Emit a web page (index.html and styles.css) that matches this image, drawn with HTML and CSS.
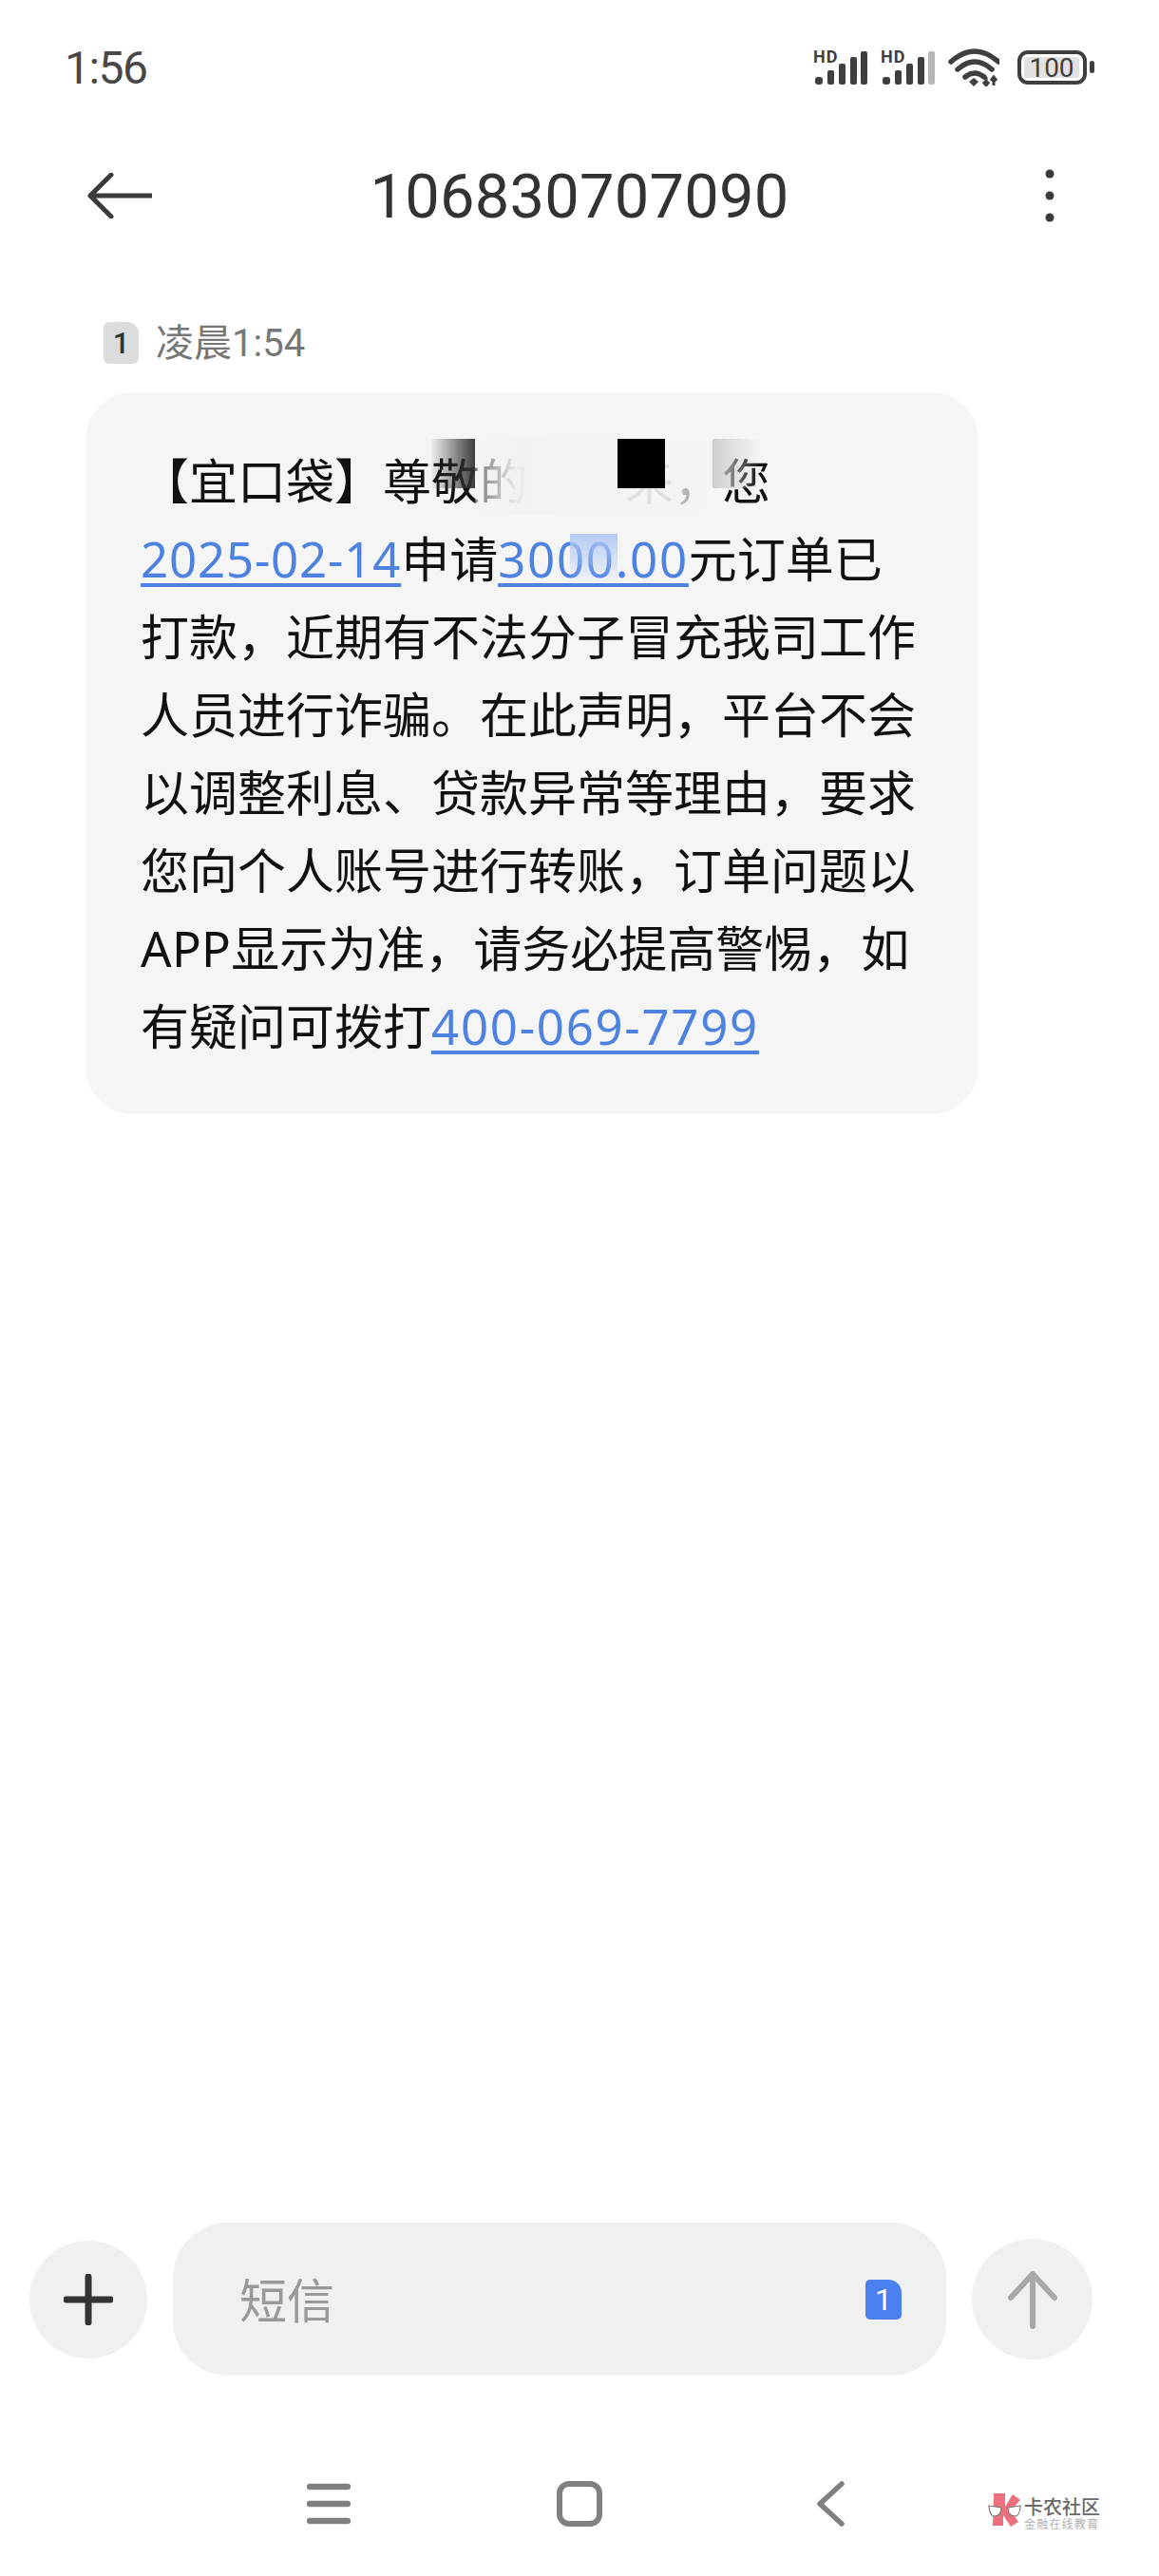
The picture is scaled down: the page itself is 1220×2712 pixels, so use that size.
FILE: index.html
```html
<!DOCTYPE html>
<html lang="zh-CN">
<head>
    <meta charset="UTF-8">
    <meta name="viewport" content="width=device-width, initial-scale=1.0">
    <title>106830707090</title>
    <link rel="stylesheet" href="styles.css">
</head>
<body>
    <div class="status-bar">
        <span class="clock">1:56</span>
        <div class="status-icons">
            <svg class="signal" width="57" height="43" viewBox="0 -6 57 43">
                <text x="0" y="12.5" class="hd">HD</text>
                <rect x="2" y="28" width="8" height="8" rx="3"/>
                <rect x="15" y="21" width="7" height="15" rx="2"/>
                <rect x="27" y="14" width="7" height="22" rx="2"/>
                <rect x="39" y="7" width="7" height="29" rx="2"/>
                <rect x="50" y="1" width="7" height="35" rx="2"/>
            </svg>
            <svg class="signal" width="57" height="43" viewBox="0 -6 57 43">
                <text x="0" y="12.5" class="hd">HD</text>
                <rect x="2" y="28" width="8" height="8" rx="3"/>
                <rect x="15" y="21" width="7" height="15" rx="2"/>
                <rect x="27" y="14" width="7" height="22" rx="2"/>
                <rect x="39" y="7" width="7" height="29" rx="2"/>
                <rect class="bar-off" x="50" y="1" width="7" height="35" rx="2"/>
            </svg>
            <svg class="wifi" width="54" height="40" viewBox="0 0 54 40">
                <path d="M3 14Q28-8 53 14M10 22Q28 6 46 22M18 30Q28 22 38 30" fill="none" stroke="#3f3f3f" stroke-width="5.5" stroke-linecap="round"/>
                <path d="M22 35l5-4 5 4-5 5z" fill="#3f3f3f"/>
                <path d="M40 30v9M37 35l3 4 3-4M48 39v-9M45 34l3-4 3 4" fill="none" stroke="#3f3f3f" stroke-width="3"/>
            </svg>
            <svg class="battery" width="81" height="36" viewBox="0 0 81 36">
                <rect x="2" y="2" width="69" height="32" rx="9" fill="none" stroke="#3f3f3f" stroke-width="4"/>
                <rect x="7" y="7" width="58" height="22" rx="2" fill="#e2e2e2"/>
                <text x="36" y="28" class="battery-num">100</text>
                <rect x="76" y="11" width="5" height="13" rx="2.5" fill="#3f3f3f"/>
            </svg>
        </div>
    </div>

    <div class="header">
        <svg class="back" width="68" height="48" viewBox="0 0 68 48">
            <path d="M25 2L3 24l22 22M3 24h65" fill="none" stroke="#3a3a3a" stroke-width="5" stroke-linecap="round" stroke-linejoin="round"/>
        </svg>
        <h1 class="title">106830707090</h1>
        <svg class="more" width="10" height="56" viewBox="0 0 10 56">
            <circle cx="5" cy="5" r="4.5"/>
            <circle cx="5" cy="28" r="4.5"/>
            <circle cx="5" cy="51" r="4.5"/>
        </svg>
    </div>

    <div class="meta">
        <span class="sim-badge">1</span>
        <span class="meta-time">凌晨1:54</span>
    </div>

    <div class="bubble">
        【宜口袋】尊敬的　　来，您<br>
        <a class="link link-date">2025-02-14</a>申请<a class="link">3000.00</a>元订单已<br>
        打款，近期有不法分子冒充我司工作<br>
        人员进行诈骗。在此声明，平台不会<br>
        以调整利息、贷款异常等理由，要求<br>
        您向个人账号进行转账，订单问题以<br>
        <span class="latin">APP</span>显示为准，请务必提高警惕，如<br>
        有疑问可拨打<a class="link">400-069-7799</a>
        <span class="mask mask-fade"></span>
        <span class="mask mask-dark"></span>
        <span class="mask mask-black"></span>
        <span class="mask mask-grey"></span>
        <span class="mask mask-blue"></span>
    </div>

    <div class="composer">
        <div class="round-btn">
            <svg width="52" height="54" viewBox="0 0 52 54">
                <path d="M26 3v48M3 27h46" fill="none" stroke="#333" stroke-width="7" stroke-linecap="round"/>
            </svg>
        </div>
        <div class="input-box">
            <span class="placeholder">短信</span>
            <span class="sim-tag">1</span>
        </div>
        <div class="round-btn round-btn-send">
            <svg width="52" height="62" viewBox="0 0 52 62">
                <path d="M26 59V4M3 29L26 4l23 25" fill="none" stroke="#a8a8a8" stroke-width="6" stroke-linecap="round" stroke-linejoin="round"/>
            </svg>
        </div>
    </div>

    <div class="nav">
        <div class="nav-cell">
            <svg width="46" height="44" viewBox="0 0 46 44">
                <path d="M3 4h40M3 22h40M3 40h40" fill="none" stroke="#808080" stroke-width="6.5" stroke-linecap="round"/>
            </svg>
        </div>
        <div class="nav-cell">
            <svg width="48" height="48" viewBox="0 0 48 48">
                <rect x="3" y="3" width="42" height="42" rx="10" fill="none" stroke="#808080" stroke-width="6"/>
            </svg>
        </div>
        <div class="nav-cell">
            <svg width="30" height="48" viewBox="0 0 30 48">
                <path d="M27 3L4 24l23 21" fill="none" stroke="#808080" stroke-width="5.5" stroke-linecap="round" stroke-linejoin="round"/>
            </svg>
        </div>
        <div class="watermark">
            <svg width="36" height="35" viewBox="0 0 36 35">
                <path d="M6 0h12v14L26 1l8 6-10 11 8 12-8 5-8-12v11H5z" fill="#ee6f7d"/>
                <path d="M1 13l13 2c0 6-3 9-7 9-4 0-6-5-6-11zM34 13l-13 2c0 6 3 9 7 9 4 0 6-5 6-11z" fill="#fff" stroke="#777" stroke-width="1.2"/>
            </svg>
            <div class="watermark-text">
                <span class="watermark-name">卡农社区</span>
                <span class="watermark-sub">金融在线教育</span>
            </div>
        </div>
    </div>
</body>
</html>
```

FILE: styles.css
```css
* {
    box-sizing: border-box;
}

body {
    font-family: Roboto, "Noto Sans CJK SC", sans-serif;
    margin: 0;
    width: 1220px;
    height: 2712px;
    display: flex;
    flex-direction: column;
    background: #fff;
    position: relative;
    overflow: hidden;
}

/* status bar */
.status-bar {
    height: 140px;
    padding: 2px 68px 0;
    display: flex;
    align-items: center;
    justify-content: space-between;
}
.clock {
    font-size: 48px;
    letter-spacing: -1.5px;
    color: #484848;
}
.status-icons {
    display: flex;
    align-items: center;
    gap: 14px;
}
.signal {
    margin-top: -6px;
    fill: #3f3f3f;
}
.bar-off {
    fill: #b8b8b8;
}
.hd {
    font-size: 18px;
    font-weight: 700;
    letter-spacing: 1px;
}
.battery {
    margin-left: 5px;
}
.battery-num {
    font-size: 28px;
    fill: #3f3f3f;
    text-anchor: middle;
}

/* header */
.header {
    height: 132px;
    padding: 0 92px;
    display: grid;
    grid-template-columns: 1fr auto 1fr;
    align-items: center;
}
.title {
    margin: 2px 0 0;
    font-size: 65px;
    font-weight: 400;
    letter-spacing: 0.2px;
    color: #333;
}
.more {
    justify-self: end;
    margin-right: 18px;
    fill: #3a3a3a;
}

/* message */
.meta {
    margin: 67px 0 30px 109px;
    height: 44px;
    display: flex;
    align-items: center;
    gap: 18px;
}
.sim-badge {
    width: 37px;
    height: 44px;
    border-radius: 6px 12px 6px 6px;
    background: #dcdcdc;
    color: #333;
    font-size: 31px;
    font-weight: 500;
    display: flex;
    align-items: center;
    justify-content: center;
}
.meta-time {
    font-size: 40px;
    padding-bottom: 6px;
    color: #777;
}
.bubble {
    width: 940px;
    height: 760px;
    margin-left: 90px;
    padding: 52px 0 0 58px;
    border-radius: 50px;
    background: #f5f5f5;
    font-family: "Noto Sans", "Noto Sans CJK SC", sans-serif;
    font-size: 51px;
    line-height: 82px;
    color: #111;
    white-space: nowrap;
    position: relative;
}
.link {
    color: #4d82e0;
    letter-spacing: 1.7px;
    text-decoration: underline;
    text-decoration-thickness: 4px;
    text-underline-offset: 6px;
}
.link-date {
    letter-spacing: 0.8px;
}
.latin {
    letter-spacing: 0.3px;
}

/* blurred-out name in the first line */
.mask {
    position: absolute;
    top: 49px;
    width: 50px;
    height: 52px;
}
.mask-dark {
    left: 360px;
    background: linear-gradient(to right, rgba(244, 244, 244, 0) 5%, rgba(50, 50, 50, 0.95));
}
.mask-fade {
    left: 410px;
    width: 240px;
    height: 80px;
    background: linear-gradient(to right, rgba(244, 244, 244, 0.45), rgba(242, 242, 242, 0.97) 18%, rgba(244, 244, 244, 0.9) 85%, rgba(244, 244, 244, 0.55));
}
.mask-black {
    left: 560px;
    background: #000;
}
.mask-grey {
    left: 660px;
    background: linear-gradient(to right, #cfcfcf, rgba(244, 244, 244, 0));
}
.mask-blue {
    left: 510px;
    top: 149px;
    height: 50px;
    background: linear-gradient(to bottom, rgba(176, 200, 245, 0.95), rgba(176, 200, 245, 0.05));
}

/* input row */
.composer {
    margin-top: auto;
    height: 161px;
    padding: 0 70px 0 31px;
    display: flex;
    align-items: center;
    gap: 27px;
}
.round-btn {
    width: 124px;
    height: 124px;
    border-radius: 50%;
    background: #f0f0f0;
    display: flex;
    align-items: center;
    justify-content: center;
    flex-shrink: 0;
}
.round-btn-send {
    width: 127px;
    height: 127px;
}
.input-box {
    flex: 1;
    height: 161px;
    padding: 0 47px 0 70px;
    border-radius: 58px;
    background: #f0f0f0;
    display: flex;
    align-items: center;
    justify-content: space-between;
}
.placeholder {
    font-size: 50px;
    padding-bottom: 4px;
    color: #999;
}
.sim-tag {
    width: 38px;
    height: 42px;
    border-radius: 5px 14px 5px 5px;
    background: #4a80f0;
    color: #fff;
    font-size: 32px;
    display: flex;
    align-items: center;
    justify-content: center;
}

/* navigation bar */
.nav {
    height: 211px;
    padding-top: 111px;
    display: flex;
    justify-content: center;
    align-items: flex-start;
}
.nav-cell {
    width: 264px;
    height: 48px;
    display: flex;
    align-items: center;
    justify-content: center;
}
.watermark {
    position: absolute;
    left: 1040px;
    top: 2625px;
    display: flex;
    gap: 2px;
}
.watermark-text {
    display: flex;
    flex-direction: column;
    font-family: "Noto Sans CJK SC", sans-serif;
    white-space: nowrap;
}
.watermark-name {
    font-size: 20px;
    line-height: 22px;
    margin-top: 3px;
    font-weight: 500;
    color: #6a6a6a;
}
.watermark-sub {
    font-size: 12px;
    line-height: 14px;
    letter-spacing: 1.2px;
    color: #b0b0b0;
}
```
